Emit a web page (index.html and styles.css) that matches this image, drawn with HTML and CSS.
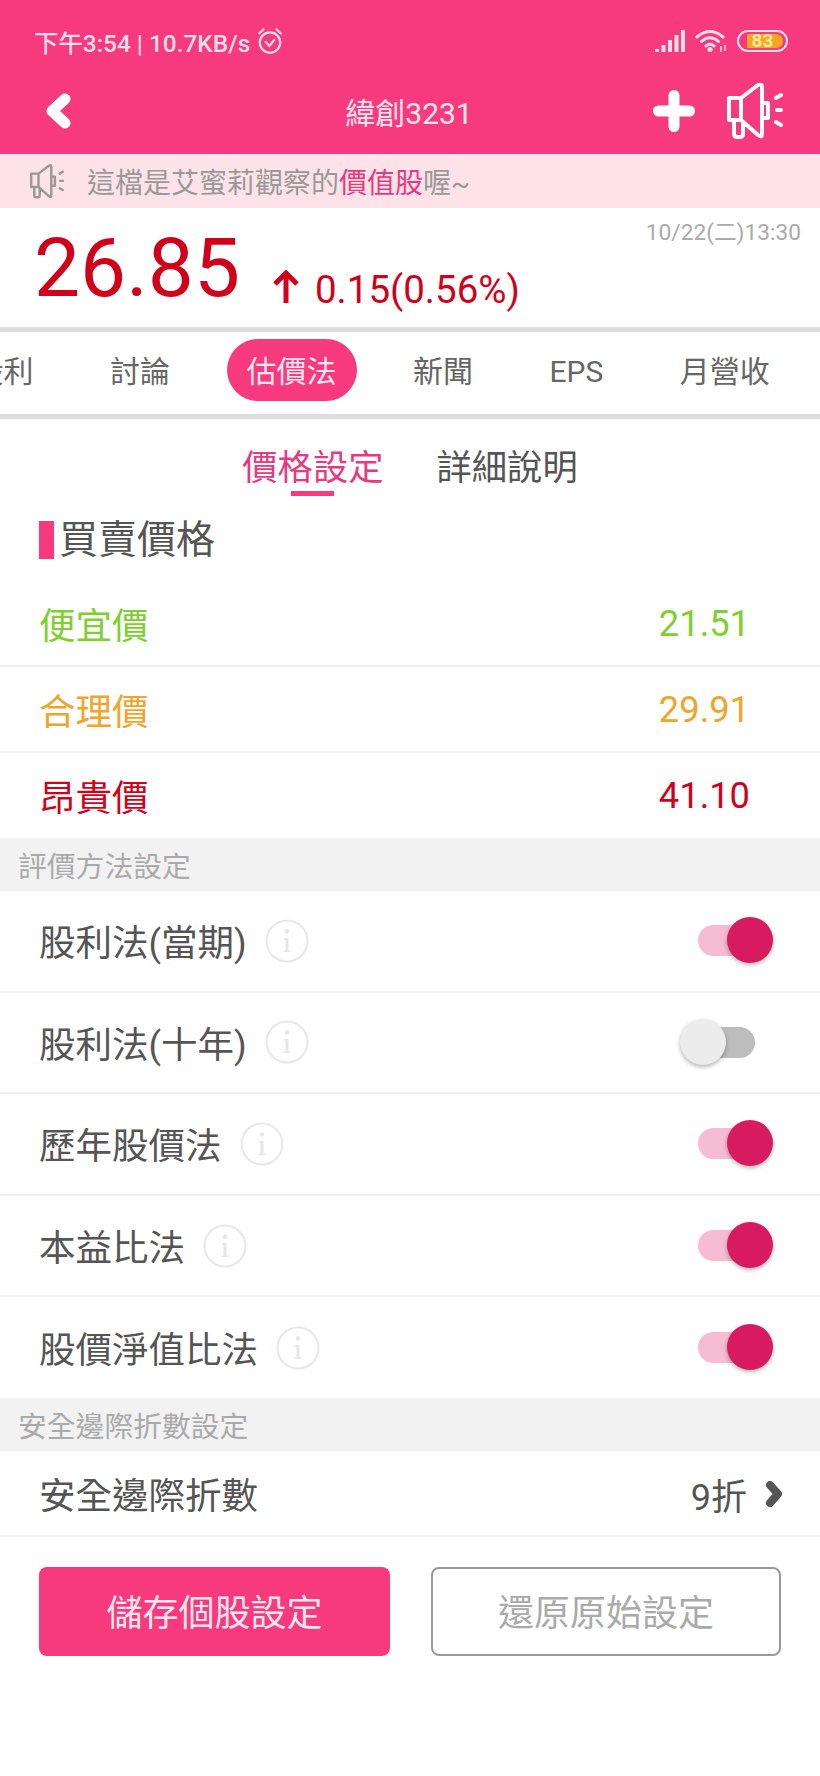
FILE: index.html
```html
<!DOCTYPE html>
<html lang="zh-Hant">
<head>
    <meta charset="UTF-8">
    <meta name="viewport" content="width=device-width, initial-scale=1.0">
    <title>緯創3231</title>
    <link rel="stylesheet" href="styles.css">
</head>
<body>
    <svg class="defs" width="0" height="0">
        <symbol id="horn" viewBox="0 0 56 56">
            <path d="M2 15H14V37H2ZM14 15L31 2Q35 0 35 4V51Q35 55 31 52L14 37M35 20H41V35H35M7 37V51Q7 54 10 54H13Q16 54 16 51V39M49 15L54 12M50 27H54M49 39L54 42" fill="none" stroke="currentColor" stroke-width="4" stroke-linecap="round" stroke-linejoin="round"/>
        </symbol>
        <symbol id="info" viewBox="0 0 44 44">
            <circle cx="22" cy="22" r="20.5" fill="none" stroke="#e8e8e8" stroke-width="2"/>
            <circle cx="22" cy="12.5" r="2.2" fill="#e6e6e6"/>
            <path d="M19 19H23.500V31.500H25.500V33H18.500V31.500H20.500V20.500H19Z" fill="#e6e6e6"/>
        </symbol>
    </svg>

    <!-- Pink header -->
    <div class="header">
        <div class="status-bar">
            <div class="status-left">
                <span>下午3:54 | 10.7KB/s</span>
                <svg class="alarm" width="26" height="28" viewBox="0 0 24 26">
                    <circle cx="12" cy="14.5" r="9.5" fill="none" stroke="currentColor" stroke-width="2"/>
                    <path d="M8 14L11.5 17.5L16 12M2 6L6 2M22 6L18 2" fill="none" stroke="currentColor" stroke-width="2" stroke-linecap="round"/>
                </svg>
            </div>
            <div class="status-right">
                <svg width="30" height="22" viewBox="0 0 30 22">
                    <path d="M0 19H4V22H0ZM6.500 15H10.500V22H6.500ZM13 10H17V22H13ZM19.500 5H23.500V22H19.500ZM26 0H30V22H26Z" fill="currentColor"/>
                </svg>
                <svg width="32" height="24" viewBox="0 0 32 24">
                    <path d="M2 8Q15 -3 28 8M6.500 12.500Q15 5 23.500 12.500M11 17Q15 13.500 19 17" fill="none" stroke="currentColor" stroke-width="3" stroke-linecap="round"/>
                    <circle cx="15" cy="20.500" r="2.500" fill="currentColor"/>
                    <path d="M26 17V23M30 16V22" stroke="currentColor" stroke-width="1.500"/>
                </svg>
                <div class="battery"><div class="battery-fill"></div><span>83</span></div>
            </div>
        </div>
        <div class="title-bar">
            <svg class="back" width="26" height="36" viewBox="0 0 26 36">
                <path d="M20 6L7 18L20 30" fill="none" stroke="#fff" stroke-width="11" stroke-linecap="round" stroke-linejoin="round"/>
            </svg>
            <div class="title">緯創3231</div>
            <svg class="plus" width="42" height="42" viewBox="0 0 42 42">
                <path d="M21 5.500V36.500M5.500 21H36.500" stroke="#fff" stroke-width="11" stroke-linecap="round"/>
            </svg>
            <svg class="horn-big" width="56" height="56"><use href="#horn"/></svg>
        </div>
    </div>

    <!-- Notice -->
    <div class="notice">
        <svg class="horn-small" width="34" height="35"><use href="#horn"/></svg>
        <span>這檔是艾蜜莉觀察的<em>價值股</em>喔~</span>
    </div>

    <!-- Quote -->
    <div class="quote">
        <div class="quote-main">
            <div class="price">26.85</div>
            <svg class="arrow" width="28" height="34" viewBox="0 0 28 34">
                <path d="M14 33V3M3 14L14 3L25 14" fill="none" stroke="#d0021b" stroke-width="5"/>
            </svg>
            <div class="change">0.15(0.56%)</div>
        </div>
        <div class="quote-date">10/22(二)13:30</div>
    </div>

    <!-- Scrolling tabs -->
    <div class="tabs">
        <div class="tab">股利</div>
        <div class="tab">討論</div>
        <div class="tab active">估價法</div>
        <div class="tab">新聞</div>
        <div class="tab">EPS</div>
        <div class="tab">月營收</div>
    </div>

    <div class="subtabs">
        <div class="subtab active">價格設定<div class="subtab-line"></div></div>
        <div class="subtab">詳細說明</div>
    </div>

    <div class="section-title"><div class="section-bar"></div>買賣價格</div>

    <div class="prices">
        <div class="price-row cheap"><span>便宜價</span><span class="price-value">21.51</span></div>
        <div class="price-row fair"><span>合理價</span><span class="price-value">29.91</span></div>
        <div class="price-row high"><span>昂貴價</span><span class="price-value">41.10</span></div>
    </div>

    <div class="group-head">評價方法設定</div>
    <div class="method-row">
        <span>股利法(當期)</span><svg class="info" width="44" height="44"><use href="#info"/></svg>
        <div class="toggle on"><div class="knob"></div></div>
    </div>
    <div class="method-row">
        <span>股利法(十年)</span><svg class="info" width="44" height="44"><use href="#info"/></svg>
        <div class="toggle"><div class="knob"></div></div>
    </div>
    <div class="method-row">
        <span>歷年股價法</span><svg class="info" width="44" height="44"><use href="#info"/></svg>
        <div class="toggle on"><div class="knob"></div></div>
    </div>
    <div class="method-row">
        <span>本益比法</span><svg class="info" width="44" height="44"><use href="#info"/></svg>
        <div class="toggle on"><div class="knob"></div></div>
    </div>
    <div class="method-row last">
        <span>股價淨值比法</span><svg class="info" width="44" height="44"><use href="#info"/></svg>
        <div class="toggle on"><div class="knob"></div></div>
    </div>

    <div class="group-head">安全邊際折數設定</div>
    <div class="margin-row">
        <span>安全邊際折數</span>
        <div class="margin-value">
            <span>9折</span>
            <svg width="20" height="28" viewBox="0 0 20 28">
                <path d="M6 5L14 14L6 23" fill="none" stroke="#555" stroke-width="8" stroke-linecap="round" stroke-linejoin="round"/>
            </svg>
        </div>
    </div>

    <div class="buttons">
        <div class="btn btn-save">儲存個股設定</div>
        <div class="btn btn-reset">還原原始設定</div>
    </div>
</body>
</html>
```

FILE: styles.css
```css
body {
    margin: 0;
    width: 820px;
    height: 1776px;
    overflow: hidden;
    background-color: #fff;
    color: #555;
    font-family: Roboto, "Noto Sans CJK TC", sans-serif;
}
.defs {
    position: absolute;
}
/* Header */
.header {
    height: 154px;
    background-color: #f63a7d;
    color: #fcdde9;
}
.status-bar {
    display: flex;
    justify-content: space-between;
    align-items: center;
    height: 30px;
    padding: 26px 32px 0 34px;
    font-size: 24.400px;
    font-weight: 500;
}
.status-left {
    display: flex;
    align-items: center;
    gap: 7px;
}
.status-right {
    display: flex;
    align-items: center;
    gap: 10px;
}
.battery {
    position: relative;
    box-sizing: border-box;
    width: 51px;
    height: 22px;
    border: 2px solid #fcdde9;
    border-radius: 11px;
    text-align: center;
    font-size: 19px;
    font-weight: 700;
    line-height: 18px;
    color: #ffeb9c;
}
.battery span {
    position: relative;
}
.battery-fill {
    position: absolute;
    top: 2px;
    bottom: 2px;
    left: 8px;
    right: 3px;
    border-radius: 0 7px 7px 0;
    background-color: #f5a623;
}
.title-bar {
    display: flex;
    align-items: center;
    height: 56px;
    margin-top: 27px;
    padding: 0 37px 0 45px;
}
.title {
    flex: 1;
    padding-left: 94px;
    text-align: center;
    font-size: 30px;
    color: #ffe6ef;
}
.plus {
    margin-right: 32px;
}
.horn-big {
    color: #fff;
}
/* Notice */
.notice {
    display: flex;
    align-items: center;
    gap: 23px;
    height: 54px;
    padding-left: 30px;
    background-color: #fde3e9;
    color: #999;
    font-size: 28px;
}
.notice em {
    font-style: normal;
    color: #e8397f;
}
.horn-small {
    color: #999;
    flex: none;
}
/* Quote */
.quote {
    display: flex;
    justify-content: space-between;
    align-items: flex-start;
    height: 119px;
    border-bottom: 5px solid #ddd;
    color: #d0021b;
}
.quote-main {
    display: flex;
    align-items: flex-end;
    padding: 20px 0 0 34px;
}
.price {
    font-size: 82px;
    line-height: 80px;
}
.arrow {
    margin: 0 15px 4px 32px;
}
.change {
    font-size: 38.500px;
    line-height: 36px;
}
.quote-date {
    margin: 10px 19px 0 0;
    font-size: 22.700px;
    line-height: 30px;
    color: #aaa;
}
/* Tabs */
.tabs {
    display: flex;
    gap: 36.500px;
    height: 75px;
    padding: 7px 0 0 0;
    border-bottom: 5px solid #ddd;
    overflow: hidden;
    font-size: 30px;
}
.tab {
    flex: none;
    height: 62px;
    padding: 0 20px;
    border-radius: 31px;
    line-height: 66px;
    color: #666;
}
.tab:first-child {
    margin-left: -46.500px;
}
.tab.active {
    background-color: #f63a7d;
    color: #fde8f0;
}
/* Sub tabs */
.subtabs {
    display: flex;
    justify-content: center;
    gap: 53px;
    padding-top: 27px;
    height: 50px;
    font-size: 35.300px;
    line-height: 44px;
}
.subtab.active {
    color: #e8397f;
}
.subtab-line {
    width: 43px;
    height: 5px;
    margin: 1px auto 0;
    background-color: #f63a7d;
}
.section-title {
    display: flex;
    align-items: center;
    gap: 5px;
    height: 38px;
    margin: 25px 0 22px 39px;
    font-size: 39px;
    line-height: 40px;
}
.section-bar {
    width: 15px;
    height: 38px;
    background-color: #f63a7d;
}
/* Price rows */
.price-row {
    display: flex;
    justify-content: space-between;
    align-items: center;
    box-sizing: border-box;
    height: 86px;
    padding: 0 70px 0 39px;
    border-bottom: 2px solid #f1f1f1;
    font-size: 36.500px;
}
.price-row:last-child {
    height: 85px;
    border-bottom: none;
}
.price-value {
    font-size: 36.300px;
}
.cheap {
    color: #80cf30;
}
.fair {
    color: #f0a52a;
}
.high {
    color: #d0021b;
}
/* Setting groups */
.group-head {
    box-sizing: border-box;
    height: 53px;
    padding-left: 18px;
    background-color: #f2f2f2;
    color: #aaa;
    font-size: 28.800px;
    line-height: 58px;
}
.method-row {
    display: flex;
    align-items: center;
    gap: 18px;
    box-sizing: border-box;
    height: 101.600px;
    padding-left: 39px;
    border-bottom: 2px solid #f1f1f1;
    font-size: 36.500px;
}
.method-row.last {
    height: 100.600px;
    border-bottom: none;
}
.toggle {
    position: relative;
    width: 57px;
    height: 31px;
    margin: 0 65px 0 auto;
    border-radius: 16px;
    background-color: #bdbdbd;
}
.toggle.on {
    background-color: #f5bcd3;
}
.knob {
    position: absolute;
    top: -8px;
    left: -18px;
    width: 46px;
    height: 46px;
    border-radius: 50%;
    background-color: #ececec;
    box-shadow: 0 2px 4px rgba(0, 0, 0, 0.3);
}
.toggle.on .knob {
    left: 29px;
    background-color: #d81b60;
}
.margin-row {
    display: flex;
    justify-content: space-between;
    align-items: center;
    box-sizing: border-box;
    height: 86px;
    padding: 2px 36px 0 39px;
    border-bottom: 2px solid #f1f1f1;
    font-size: 36.500px;
}
.margin-value {
    display: flex;
    align-items: center;
    gap: 17px;
    font-size: 36px;
}
/* Buttons */
.buttons {
    display: flex;
    gap: 41px;
    padding: 30px 0 0 39px;
}
.btn {
    box-sizing: border-box;
    width: 350px;
    height: 89px;
    border-radius: 8px;
    text-align: center;
    font-size: 36px;
    line-height: 95px;
}
.btn-save {
    width: 351px;
    background-color: #f63a7d;
    color: #fde8f0;
}
.btn-reset {
    border: 2px solid #999;
    color: #aaa;
    line-height: 91px;
}
```
